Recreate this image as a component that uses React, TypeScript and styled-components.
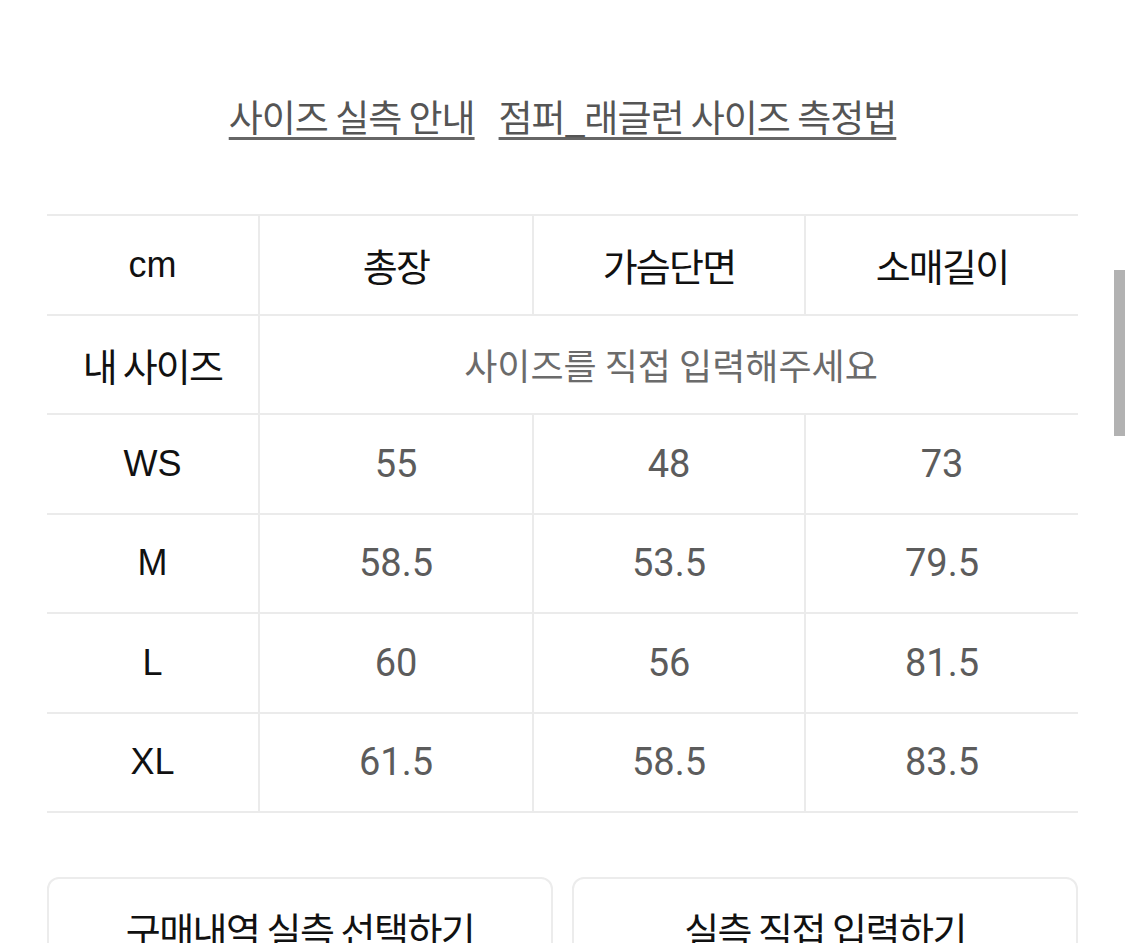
import React from "react";
import styled, { createGlobalStyle } from "styled-components";

const Global = createGlobalStyle`
  html, body { margin: 0; padding: 0; background: #fff; }
  body { font-family: "Liberation Sans", "Noto Sans CJK KR", sans-serif; }
`;

const Page = styled.div`
  width: 1125px;
  padding: 0 47px;
  box-sizing: border-box;
`;

const Links = styled.div`
  display: flex;
  justify-content: center;
  align-items: flex-start;
  gap: 24px;
  padding-top: 91px;
  height: 214px;
  box-sizing: border-box;
`;

const GuideLink = styled.a`
  font-family: "Noto Sans CJK KR", sans-serif;
  font-size: 37px;
  letter-spacing: -1px;
  line-height: 50px;
  color: #555;
  text-decoration: underline;
  text-decoration-thickness: 3px;
  text-underline-offset: 5px;
  text-decoration-color: #666;
`;

const Table = styled.div`
  display: grid;
  grid-template-columns: 213px 274px 272px 272px;
  grid-auto-rows: 99.5px;
  border-top: 2px solid #ebebeb;
`;

const Cell = styled.div<{ $span?: number; $last?: boolean; $latin?: boolean; $value?: boolean }>`
  grid-column: span ${(p) => p.$span ?? 1};
  display: flex;
  align-items: center;
  justify-content: center;
  box-sizing: border-box;
  border-bottom: 2px solid #ebebeb;
  border-right: ${(p) => (p.$last ? "none" : "2px solid #ebebeb")};
  font-family: ${(p) =>
    p.$value
      ? `"Roboto", "Noto Sans CJK KR", sans-serif`
      : p.$latin
      ? `"Liberation Sans", sans-serif`
      : `"Noto Sans CJK KR", sans-serif`};
  font-size: ${(p) => (p.$value ? "38px" : p.$latin ? "36px" : "38px")};
  letter-spacing: ${(p) => (p.$latin || p.$value ? "0" : "-1.8px")};
  color: ${(p) => (p.$value ? "#5c5c5c" : "#111")};
`;

const Placeholder = styled(Cell)`
  color: #6b6b6b;
  letter-spacing: 0;
  font-size: 36px;
  padding-left: 4px;
`;

const Buttons = styled.div`
  display: grid;
  grid-template-columns: 1fr 1fr;
  gap: 19px;
  margin-top: 64px;
`;

const ActionButton = styled.button`
  height: 110px;
  background: #fff;
  border: 2px solid #ececec;
  border-radius: 12px;
  font-family: "Noto Sans CJK KR", sans-serif;
  font-size: 38px;
  letter-spacing: -1.5px;
  color: #111;
  display: flex;
  align-items: flex-start;
  justify-content: center;
  padding-top: 22px;
`;

const ScrollThumb = styled.div`
  position: fixed;
  right: 0;
  top: 270px;
  width: 11px;
  height: 166px;
  background: #b2b2b2;
`;

const headers = ["총장", "가슴단면", "소매길이"];
const rows: [string, string, string, string][] = [
  ["WS", "55", "48", "73"],
  ["M", "58.5", "53.5", "79.5"],
  ["L", "60", "56", "81.5"],
  ["XL", "61.5", "58.5", "83.5"],
];

export default function App() {
  return (
    <>
      <Global />
      <Page>
        <Links>
          <GuideLink>사이즈 실측 안내</GuideLink>
          <GuideLink>점퍼_래글런 사이즈 측정법</GuideLink>
        </Links>
        <Table>
          <Cell $latin>cm</Cell>
          {headers.map((h, i) => (
            <Cell key={h} $last={i === headers.length - 1}>
              {h}
            </Cell>
          ))}
          <Cell>내 사이즈</Cell>
          <Placeholder $span={3} $last>
            사이즈를 직접 입력해주세요
          </Placeholder>
          {rows.map((r) => (
            <React.Fragment key={r[0]}>
              <Cell $latin>{r[0]}</Cell>
              <Cell $value>{r[1]}</Cell>
              <Cell $value>{r[2]}</Cell>
              <Cell $value $last>
                {r[3]}
              </Cell>
            </React.Fragment>
          ))}
        </Table>
        <Buttons>
          <ActionButton>구매내역 실측 선택하기</ActionButton>
          <ActionButton>실측 직접 입력하기</ActionButton>
        </Buttons>
      </Page>
      <ScrollThumb />
    </>
  );
}
